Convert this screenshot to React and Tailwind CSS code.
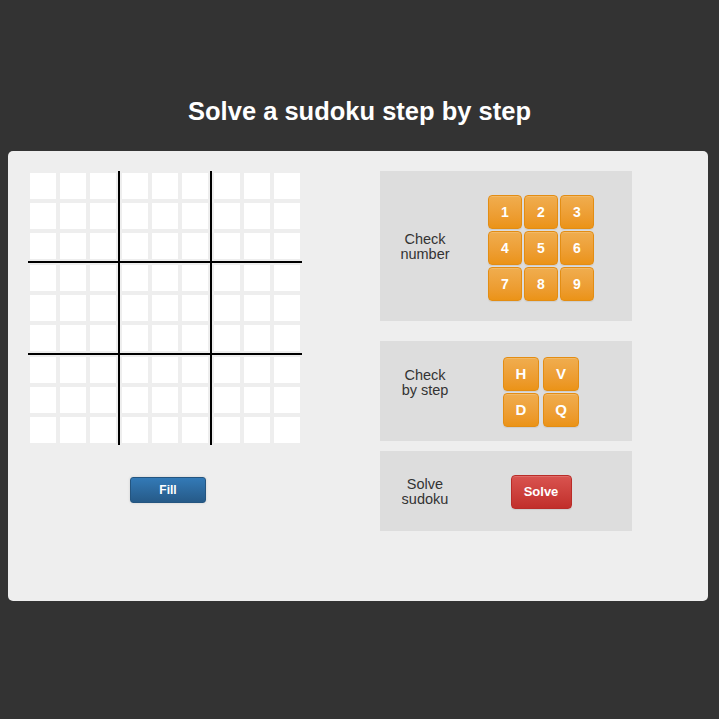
import React from "react";

const BOXES = Array.from({ length: 9 }, (_, i) => i);
const CELLS = Array.from({ length: 9 }, (_, i) => i);

const orange =
  "flex items-center justify-center rounded-[4px] border border-[#e38d13] bg-linear-to-b from-[#f0ad4e] to-[#eb9316] text-white font-bold shadow-[inset_0_1px_0_rgba(255,255,255,0.15),0_1px_1px_rgba(0,0,0,0.075)]";

function Board() {
  return (
    <div className="grid grid-cols-[90px_90px_90px] gap-[2px] bg-black w-[274px]">
      {BOXES.map((b) => (
        <div key={b} className="grid grid-cols-3 gap-[4px] p-[2px] bg-[#eeeeee]">
          {CELLS.map((c) => (
            <div key={c} className="h-[26px] bg-white" />
          ))}
        </div>
      ))}
    </div>
  );
}

function Label({ children, className = "" }) {
  return (
    <div className={`w-[90px] text-center text-[14.5px] leading-[15px] text-[#333333] ${className}`}>
      {children}
    </div>
  );
}

export default function App() {
  return (
    <div className="min-h-[719px] bg-[#333333] font-['Liberation_Sans',Arial,sans-serif] pt-[96px]">
      <h1 className="h-[30px] text-center text-[25.5px] leading-[30px] font-bold text-white">
        Solve a sudoku step by step
      </h1>

      <div className="mt-[25px] ml-[8px] w-[700px] h-[450px] rounded-[5px] bg-[#eeeeee] p-[20px] flex">
        {/* plateau */}
        <div className="w-[280px] flex flex-col">
          <Board />
          <div className="mt-[32px] flex justify-center">
            <button className="w-[76px] h-[26px] rounded-[3px] border border-[#245580] bg-linear-to-b from-[#337ab7] to-[#265a88] text-white text-[12px] font-bold shadow-[0_0_3px_rgba(0,0,0,0.12)]">
              Fill
            </button>
          </div>
        </div>

        {/* contrôles */}
        <div className="ml-[72px] w-[252px] flex flex-col">
          <div className="h-[150px] bg-[#dddddd] flex items-center">
            <Label className="mt-[2px]">
              Check
              <br />
              number
            </Label>
            <div className="w-[142px] flex justify-center">
              <div className="mt-[4px] grid grid-cols-[34px_34px_34px] gap-[2px]">
                {[1, 2, 3, 4, 5, 6, 7, 8, 9].map((n) => (
                  <button key={n} className={`${orange} h-[34px] text-[14px]`}>
                    {n}
                  </button>
                ))}
              </div>
            </div>
          </div>

          <div className="mt-[20px] h-[100px] bg-[#dddddd] flex items-center">
            <Label className="mb-[16px]">
              Check
              <br />
              by step
            </Label>
            <div className="w-[142px] flex justify-center">
              <div className="mt-[2px] grid grid-cols-[36px_36px] gap-x-[4px] gap-y-[2px]">
                {["H", "V", "D", "Q"].map((l) => (
                  <button key={l} className={`${orange} h-[34px] text-[15px]`}>
                    {l}
                  </button>
                ))}
              </div>
            </div>
          </div>

          <div className="mt-[10px] h-[80px] bg-[#dddddd] flex items-center">
            <Label className="mt-[2px]">
              Solve
              <br />
              sudoku
            </Label>
            <div className="w-[142px] flex justify-center">
              <button className="mt-[2px] w-[61px] h-[34px] rounded-[4px] border border-[#b92c28] bg-linear-to-b from-[#d9534f] to-[#c12e2a] text-white text-[13px] font-bold shadow-[inset_0_1px_0_rgba(255,255,255,0.15),0_1px_1px_rgba(0,0,0,0.075)]">
                Solve
              </button>
            </div>
          </div>
        </div>
      </div>
    </div>
  );
}
